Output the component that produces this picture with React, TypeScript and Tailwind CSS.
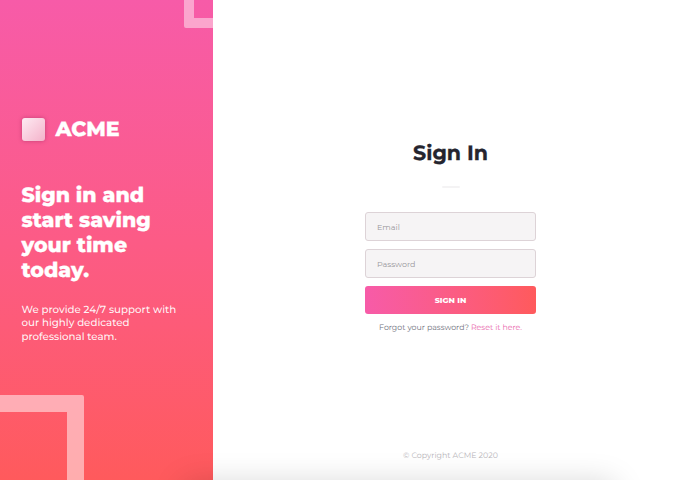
import React from "react";

export default function App() {
  return (
    <div className="relative flex h-[480px] w-[688px] overflow-hidden bg-white font-['Montserrat','Inter',sans-serif] [text-rendering:geometricPrecision]">
      <aside className="relative flex w-[213px] shrink-0 flex-col overflow-hidden bg-linear-to-b from-[#f75ba8] via-[#fc5b86] via-50% to-[#ff5a5c] pl-[21.5px] pt-[117px] text-white">
        <div className="absolute left-[184px] top-[-40px] h-[68px] w-[80px] rounded-[2px] border-[10px] border-white/45" />
        <div className="absolute left-[-60px] top-[395px] h-[140px] w-[144px] rounded-[2px] border-[17px] border-white/50" />
        <div className="flex h-[24px] items-center">
          <div className="size-[23px] rounded-[3px] bg-linear-to-br from-[#fdebf3] to-[#f3b2ca] shadow-[0_0_4px_rgba(120,20,70,0.4)]" />
          <span className="ml-[11px] pt-[2px] text-[20.5px] font-extrabold leading-6 tracking-[-0.1px] [-webkit-text-stroke:0.3px_white]">ACME</span>
        </div>
        <h1 className="mt-[42px] whitespace-nowrap text-[20.5px] font-extrabold leading-[25px] [-webkit-text-stroke:0.3px_white]">
          <span className="block">Sign in and</span>
          <span className="block">start saving</span>
          <span className="block">your time</span>
          <span className="block">today.</span>
        </h1>
        <p className="mt-[19.6px] whitespace-nowrap text-[10.25px] font-medium leading-[13.6px] text-white/95">
          <span className="block">We provide 24/7 support with</span>
          <span className="block">our highly dedicated</span>
          <span className="block">professional team.</span>
        </p>
      </aside>
      <main className="flex flex-1 flex-col items-center pt-[139px]">
        <h2 className="text-[20.6px] font-bold leading-[30px] text-[#25252f] [-webkit-text-stroke:0.3px_#25252f]">Sign In</h2>
        <div className="mt-[17px] h-[2px] w-[18px] rounded-full bg-[#f4f3f4]" />
        <form className="mt-[24px] flex w-[171px] flex-col">
          <input aria-label="Email" placeholder="Email" className="h-[29px] rounded-[3px] border border-[#ddd3d7] bg-[#f6f4f5] px-[11px] text-[8px] placeholder:text-[#99979b]" />
          <input aria-label="Password" placeholder="Password" className="mt-[8px] h-[29px] rounded-[3px] border border-[#ddd3d7] bg-[#f6f4f5] px-[11px] text-[8px] placeholder:text-[#99979b]" />
          <button type="button" className="mt-[8px] h-[28px] rounded-[3px] bg-linear-to-r from-[#f75ba8] to-[#ff5a5c] pt-px text-[7.9px] font-extrabold text-white">SIGN IN</button>
        </form>
        <p className="mt-[7px] flex gap-[2px] whitespace-nowrap text-[7.85px] leading-[13px] text-[#70727e]">
          <span>Forgot your password?</span>
          <a className="text-[#e969ad]">Reset it here.</a>
        </p>
        <footer className="mt-auto mb-[18px] text-[7.9px] leading-[13px] text-[#b8b5ba]">© Copyright ACME 2020</footer>
      </main>
      <div className="pointer-events-none absolute left-[192px] top-[492px] h-[30px] w-[414px] shadow-[0_0_32px_8px_rgba(0,0,0,0.18)]" />
    </div>
  );
}
